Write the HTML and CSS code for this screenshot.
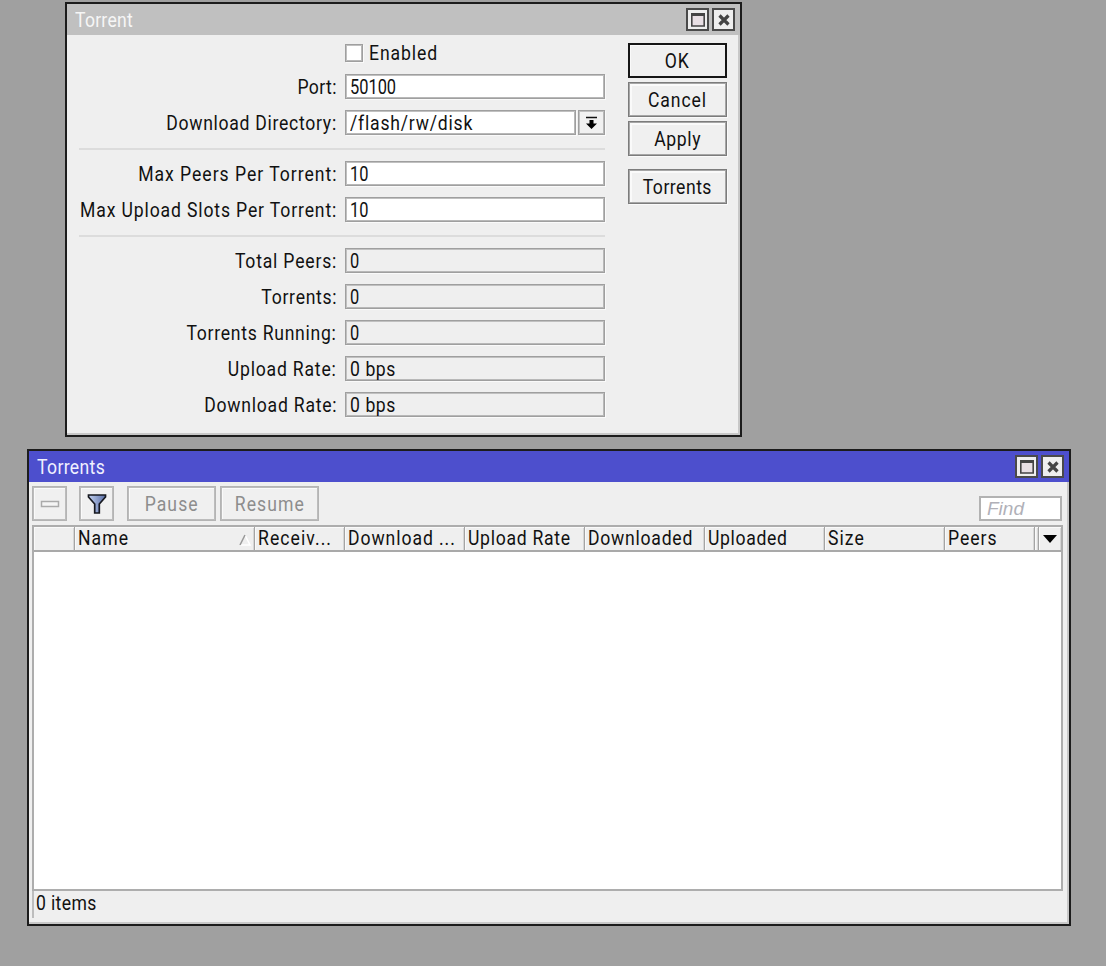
FILE: index.html
```html
<!DOCTYPE html>
<html lang="en">
<head>
<meta charset="utf-8">
<title>Torrent</title>
<link rel="stylesheet" href="styles.css">
</head>
<body>
<main class="desktop">
  <section class="window settings">
    <header class="titlebar inactive">
      <h1 class="title"><span class="t t-title1">Torrent</span></h1>
      <button class="winbtn" aria-label="Maximize"><svg width="18" height="18" viewBox="0 0 18 18"><path d="M2.8 3v12h12.400V3" fill="#e8dfe4" stroke="#444" stroke-width="1.6"/><path d="M2 3.500h14" stroke="#444" stroke-width="3"/></svg></button>
      <button class="winbtn" aria-label="Close"><svg width="18" height="18" viewBox="0 0 18 18"><path d="M4.500 4.500l9 9M13.500 4.500l-9 9" stroke="#444" stroke-width="3.200"/></svg></button>
    </header>
    <div class="content">
      <form class="form">
        <div class="row check"><span class="checkbox"></span><span class="t t-enabled">Enabled</span></div>
        <div class="row"><label class="t t-port">Port:</label><div class="field"><span class="v">50100</span></div></div>
        <div class="row"><label class="t t-dir">Download Directory:</label><div class="combo"><div class="field"><span class="t t-path">/flash/rw/disk</span></div><button type="button" class="drop" aria-label="Choose"><svg width="13" height="14" viewBox="0 0 13 14"><path d="M1 1.500h11" stroke="#111" stroke-width="1.500"/><path d="M4.500 4h4v3.500H12L6.500 13 1 7.500h3.500z" fill="#000"/></svg></button></div></div>
        <hr class="rule">
        <div class="row"><label class="t t-peers">Max Peers Per Torrent:</label><div class="field"><span class="v">10</span></div></div>
        <div class="row"><label class="t t-slots">Max Upload Slots Per Torrent:</label><div class="field"><span class="v">10</span></div></div>
        <hr class="rule">
        <div class="row"><label class="t t-total">Total Peers:</label><div class="field readonly"><span class="v">0</span></div></div>
        <div class="row"><label class="t t-torrents">Torrents:</label><div class="field readonly"><span class="v">0</span></div></div>
        <div class="row"><label class="t t-running">Torrents Running:</label><div class="field readonly"><span class="v">0</span></div></div>
        <div class="row"><label class="t t-uprate">Upload Rate:</label><div class="field readonly"><span class="v bps">0 bps</span></div></div>
        <div class="row"><label class="t t-downrate">Download Rate:</label><div class="field readonly"><span class="v bps">0 bps</span></div></div>
      </form>
      <div class="actions">
        <button class="btn default"><span class="t t-ok">OK</span></button>
        <button class="btn"><span class="t t-cancel">Cancel</span></button>
        <button class="btn"><span class="t t-apply">Apply</span></button>
        <button class="btn apart"><span class="t t-btorrents">Torrents</span></button>
      </div>
    </div>
  </section>

  <section class="window list">
    <header class="titlebar active">
      <h2 class="title"><span class="t t-title2">Torrents</span></h2>
      <button class="winbtn" aria-label="Maximize"><svg width="18" height="18" viewBox="0 0 18 18"><path d="M2.8 3v12h12.400V3" fill="#e8dfe4" stroke="#444" stroke-width="1.6"/><path d="M2 3.500h14" stroke="#444" stroke-width="3"/></svg></button>
      <button class="winbtn" aria-label="Close"><svg width="18" height="18" viewBox="0 0 18 18"><path d="M4.500 4.500l9 9M13.500 4.500l-9 9" stroke="#444" stroke-width="3.200"/></svg></button>
    </header>
    <div class="toolbar">
      <button class="tool square" aria-label="Remove"><svg width="20" height="8" viewBox="0 0 20 8"><rect x="1.500" y="1.500" width="17" height="5" fill="#f4f4f4" stroke="#aaa" stroke-width="1.500"/></svg></button>
      <button class="tool square filter" aria-label="Filter"><svg width="20" height="22" viewBox="0 0 20 22"><defs><linearGradient id="g"><stop offset="0" stop-color="#c3d2f0"/><stop offset="1" stop-color="#5a6fa8"/></linearGradient></defs><path d="M1.500 2h17v2L12.300 11v9H7.700v-9L1.500 4z" fill="url(#g)" stroke="#16181f" stroke-width="1.700"/></svg></button>
      <button class="tool pause"><span class="t t-pause">Pause</span></button>
      <button class="tool resume"><span class="t t-resume">Resume</span></button>
      <div class="find">Find</div>
    </div>
    <div class="table">
      <div class="head">
        <div class="cell"></div>
        <div class="cell"><span class="t t-name">Name</span><svg class="sort" width="12" height="12" viewBox="0 0 12 12"><path d="M6 1l5 10H1" fill="none" stroke="#fff" stroke-width="1.500"/><path d="M1 11L6 1" stroke="#999" stroke-width="1.500"/></svg></div>
        <div class="cell"><span class="t t-receiv">Receiv...</span></div>
        <div class="cell"><span class="t t-download">Download ...</span></div>
        <div class="cell"><span class="t t-hrate">Upload Rate</span></div>
        <div class="cell"><span class="t t-downloaded">Downloaded</span></div>
        <div class="cell"><span class="t t-uploaded">Uploaded</span></div>
        <div class="cell"><span class="t t-size">Size</span></div>
        <div class="cell"><span class="t t-hpeers">Peers</span></div>
        <div class="cell"></div>
        <div class="cell menu"><svg width="14" height="8" viewBox="0 0 14 8"><path d="M0 0h14L7 8z" fill="#000"/></svg></div>
      </div>
      <div class="body"></div>
    </div>
    <footer class="status"><span class="t t-items">0 items</span></footer>
  </section>
</main>
</body>
</html>
```

FILE: styles.css
```css
* { box-sizing: border-box; }
body { margin: 0; }
button { padding: 0; font: inherit; color: inherit; border-radius: 0; }
svg { display: block; }
.desktop {
  position: relative;
  width: 1106px;
  height: 966px;
  overflow: hidden;
  background: #a0a0a0;
  color: #111;
  font: 20px/24px Roboto, "Liberation Sans", sans-serif;
}
.window {
  position: absolute;
  border: 2px solid #1c1c1c;
  background: #efefef;
  box-shadow: inset -2px -2px 0 #c8c8c8;
  display: flex;
  flex-direction: column;
}
.settings { left: 65px; top: 2px; width: 677px; height: 435px; }
.list { left: 27px; top: 449px; width: 1044px; height: 477px; }

/* Condensed lettering: glyphs are narrowed and the tracking opened per label */
.t, .v { display: inline-block; white-space: pre; transform: scaleX(.88); transform-origin: left; }
.v { transform: scaleX(.82); }
.v.bps { transform: scaleX(.88); letter-spacing: .65px; }
.row label { transform-origin: right; justify-self: end; }
.btn .t, .tool .t { transform-origin: center; }
.t-title1 { letter-spacing: .27px; }
.t-title2 { letter-spacing: .4px; }
.t-enabled { letter-spacing: 1.05px; }
.t-port { letter-spacing: .45px; }
.t-dir { letter-spacing: .8px; }
.t-path { letter-spacing: .9px; }
.t-peers { letter-spacing: 1.1px; }
.t-slots { letter-spacing: .97px; }
.t-total { letter-spacing: .9px; }
.t-torrents { letter-spacing: .8px; }
.t-running { letter-spacing: .82px; }
.t-uprate { letter-spacing: .9px; }
.t-downrate { letter-spacing: .87px; }
.t-ok, .t-cancel { letter-spacing: 1px; }
.t-apply { letter-spacing: .7px; }
.t-btorrents { letter-spacing: .55px; }
.t-pause, .t-resume, .t-name, .t-receiv, .t-size { letter-spacing: 1.2px; }
.t-download { letter-spacing: 1.05px; }
.t-hrate { letter-spacing: .8px; }
.t-downloaded { letter-spacing: .85px; }
.t-uploaded { letter-spacing: .75px; }
.t-hpeers { letter-spacing: 1.1px; }
.t-items { letter-spacing: .4px; }

.titlebar { display: flex; align-items: center; height: 31px; padding: 0 5px 0 8px; gap: 3px; flex: none; }
.inactive { background: #c0c0c0; color: #f6f6f6; }
.active { background: #4d4fcd; color: #f1f1ff; }
.title { flex: 1; margin: 0; font: inherit; padding-top: 1px; }
.winbtn { width: 23px; height: 23px; border: 2px solid #4a4a4a; background: #eee; display: grid; place-items: center; }

.content { display: flex; justify-content: space-between; padding: 8px 13px 0 12px; }
.form { width: 526px; }
.row { display: grid; grid-template-columns: 258px 260px; justify-content: space-between; height: 25px; margin-bottom: 11px; align-items: center; }
.row.check { display: flex; justify-content: flex-start; gap: 6px; padding-left: 266px; height: 20px; }
.checkbox, .field, .drop { border: 1px solid #9f9f9f; background: #fff; box-shadow: inset 1px 1px 0 #c0c0c0, inset -1px -1px 0 #b8b8b8, 1px 1px 0 #fafafa; }
.checkbox { width: 18px; height: 18px; }
.field { height: 25px; padding-left: 4px; display: flex; align-items: center; }
.field.readonly { background: #efefef; }
.combo { display: flex; gap: 2px; }
.combo .field { flex: 1; }
.drop { width: 27px; height: 25px; background: #f1f1f1; display: grid; place-items: center; }
.rule { border: 0; height: 2px; margin: 13px 0 11px; background: #dcdcdc; }

.actions { display: flex; flex-direction: column; gap: 4px; width: 99px; }
.btn { height: 35px; border: 1px solid #7c7c7c; background: #f0f0f0; box-shadow: inset 0 0 0 1px #a6a6a6, inset 2px 2px 0 1px #fafafa, 1px 1px 0 #fafafa; display: grid; place-items: center; }
.default { border: 2px solid #161616; box-shadow: inset 1px 1px 0 #fafafa; }
.apart { margin-top: 9px; }

.toolbar { display: flex; height: 43px; padding: 4px 7px 0 3px; color: #8d8d8d; }
.tool { height: 35px; border: 1px solid #b4b4b4; background: #f0f0f0; box-shadow: inset 0 0 0 1px #bcbcbc, inset 1px 1px 0 1px #fafafa; display: grid; place-items: center; }
.square { width: 35px; }
.filter { margin: 0 13px 0 12px; }
.pause { width: 89px; }
.resume { width: 99px; margin-left: 4px; }
.find { margin: 10px 0 0 auto; width: 83px; height: 25px; border: 2px solid #b2b2b2; background: #fff; padding-left: 6px; color: #b0b0b8; font: italic 19px/21px "Liberation Sans", sans-serif; }

.table { margin: 0 6px 0 3px; border: 2px solid #adadad; height: 366px; display: flex; flex-direction: column; }
.head { display: grid; grid-template-columns: 41px 180px 90px 120px 120px 120px 120px 120px 90px 4px 1fr; height: 25px; border-bottom: 2px solid #a9a9a9; }
.cell { display: flex; align-items: center; padding-left: 3px; padding-bottom: 1px; border-right: 1px solid #a4a4a4; box-shadow: inset 1px 1px 0 #fafafa, inset -1px 0 0 #d6d6d6; overflow: hidden; }
.cell:nth-child(10) { padding: 0; }
.sort { margin: 3px 3px 0 auto; }
.menu { justify-content: center; padding: 0; border-right: 0; }
.body { flex: 1; background: #fff; }
.status { margin: 0 6px 0 3px; height: 27px; border-left: 2px solid #bdbdbd; padding-left: 2px; }
```
